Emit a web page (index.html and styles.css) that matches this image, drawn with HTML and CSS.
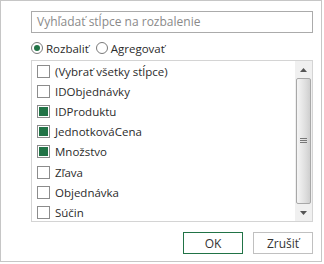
FILE: index.html
```html
<!DOCTYPE html>
<html lang="sk">
<head>
<meta charset="utf-8">
<link rel="stylesheet" href="styles.css">
</head>
<body>
<div class="dialog">
  <div class="search">Vyhľadať stĺpce na rozbalenie</div>
  <div class="radios">
    <label class="radio"><span class="circle on"></span>Rozbaliť</label>
    <label class="radio"><span class="circle"></span>Agregovať</label>
  </div>
  <div class="list">
    <div class="items">
      <div class="item"><span class="cb"></span>(Vybrať všetky stĺpce)</div>
      <div class="item"><span class="cb"></span>IDObjednávky</div>
      <div class="item"><span class="cb on"></span>IDProduktu</div>
      <div class="item"><span class="cb on"></span>JednotkováCena</div>
      <div class="item"><span class="cb on"></span>Množstvo</div>
      <div class="item"><span class="cb"></span>Zľava</div>
      <div class="item"><span class="cb"></span>Objednávka</div>
      <div class="item"><span class="cb"></span>Súčin</div>
    </div>
    <div class="scrollbar">
      <div class="arrow"><svg width="7" height="4" viewBox="0 0 7 4"><path d="M0 4 L3.5 0 L7 4Z" fill="#555"/></svg></div>
      <div class="thumb"><svg width="7" height="6" viewBox="0 0 7 6"><path d="M0 0.5H7M0 2.5H7M0 4.5H7" stroke="#777" stroke-width="1"/></svg></div>
      <div class="arrow"><svg width="7" height="4" viewBox="0 0 7 4"><path d="M0 0 L3.5 4 L7 0Z" fill="#555"/></svg></div>
    </div>
  </div>
  <div class="buttons">
    <button class="btn primary">OK</button>
    <button class="btn">Zrušiť</button>
  </div>
</div>
</body>
</html>
```
FILE: styles.css
```css
html, body {
  margin: 0;
  padding: 0;
  background: #ffffff;
}
body {
  font-family: "Open Sans", "Noto Sans", sans-serif;
  font-size: 11.5px;
  color: #2b2b2b;
}
.dialog {
  box-sizing: border-box;
  width: 322px;
  height: 262px;
  border: 1px solid #c6c6c6;
  padding: 10px 8px 0 30px;
  display: flex;
  flex-direction: column;
}
.search {
  box-sizing: border-box;
  height: 22px;
  border: 1px solid #ababab;
  color: #8a8a8a;
  padding: 0 5px;
  line-height: 20px;
  font-size: 12px;
}
.radios {
  display: flex;
  gap: 7px;
  margin-top: 3px;
  height: 24px;
  align-items: center;
}
.radio {
  display: flex;
  align-items: center;
  gap: 3px;
}
.circle {
  box-sizing: border-box;
  width: 12px;
  height: 12px;
  border: 1px solid #7a7a7a;
  border-radius: 50%;
  display: inline-flex;
  align-items: center;
  justify-content: center;
}
.circle.on::after {
  content: "";
  width: 6px;
  height: 6px;
  border-radius: 50%;
  background: #217346;
}
.list {
  box-sizing: border-box;
  height: 162px;
  border: 1px solid #d4d4d4;
  display: flex;
}
.items {
  flex: 1;
}
.item {
  height: 20.2px;
  display: flex;
  align-items: center;
  padding-left: 5px;
  gap: 5px;
}
.cb {
  box-sizing: border-box;
  width: 13px;
  height: 13px;
  border: 1px solid #8c8c8c;
  background: #fff;
  display: inline-flex;
  align-items: center;
  justify-content: center;
}
.cb.on::after {
  content: "";
  width: 9px;
  height: 9px;
  background: #217346;
}
.scrollbar {
  width: 17px;
  background: #f0f0f0;
  display: flex;
  flex-direction: column;
}
.arrow {
  height: 17px;
  display: flex;
  align-items: center;
  justify-content: center;
}
.thumb {
  box-sizing: border-box;
  flex: 1;
  margin: 0 1px;
  border: 1px solid #a8a8a8;
  border-radius: 2px;
  background: linear-gradient(to right, #f5f5f5, #e0e0e0 60%, #cfcfcf);
  display: flex;
  align-items: center;
  justify-content: center;
}
.buttons {
  display: flex;
  justify-content: flex-end;
  gap: 10px;
  margin-top: 10px;
}
.btn {
  box-sizing: border-box;
  width: 60px;
  height: 22px;
  background: #fff;
  border: 1px solid #c0c0c0;
  font-family: inherit;
  font-size: 12px;
  color: #333;
  padding: 0;
}
.btn.primary {
  border-color: #217346;
}
```
